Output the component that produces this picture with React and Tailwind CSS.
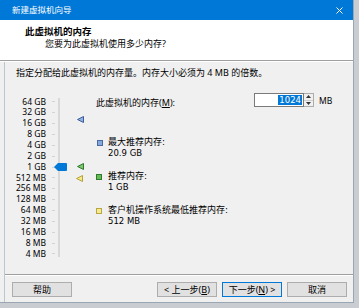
const F = "font-['Noto_Sans','Noto_Sans_CJK_SC',sans-serif]";
const D = "font-['DejaVu_Sans','Noto_Sans_CJK_SC',sans-serif]";

const labels = ["64 GB","32 GB","16 GB","8 GB","4 GB","2 GB","1 GB","512 MB","256 MB","128 MB","64 MB","32 MB","16 MB","8 MB","4 MB"];

function Tri({ fill, stroke, className }) {
  return (
    <svg width="7" height="7" viewBox="0 0 7 7" className={className}>
      <polygon points="0.5,3.5 6.5,0.5 6.5,6.5" fill={fill} stroke={stroke} strokeWidth="1" />
    </svg>
  );
}

function Sq({ fill, stroke }) {
  return <div className="w-[6px] h-[6px] border shrink-0" style={{ background: fill, borderColor: stroke }} />;
}

function Btn({ children, focus }) {
  return (
    <div className={`w-[60px] h-[15px] flex items-center justify-center text-[9px] leading-none text-black bg-[#e1e1e1] border ${focus ? "border-[#0078d7]" : "border-[#adadad]"}`}>
      {children}
    </div>
  );
}

export default function App() {
  return (
    <div className={`w-[359px] h-[308px] bg-[#c9cdd1] overflow-hidden ${F}`}>
      <div className="w-[354px] h-[303px] flex flex-col bg-[#f0f0f0] border-r border-b border-[#9aa6b2]">
        {/* title bar */}
        <div className="h-[20px] shrink-0 bg-[#0078d7] flex items-center pl-[12px] pr-[8px] text-white text-[8.5px]">
          <span className="leading-none">新建虚拟机向导</span>
          <svg width="7" height="7" viewBox="0 0 7 7" className="ml-auto mr-[2px]">
            <path d="M0.5 0.5 L6.5 6.5 M6.5 0.5 L0.5 6.5" stroke="white" strokeWidth="1" />
          </svg>
        </div>
        {/* header */}
        <div className="h-[40px] shrink-0 bg-white pl-[25px] pt-[6px] text-black">
          <div className="text-[9.5px] font-bold leading-[12px]">此虚拟机的内存</div>
          <div className="pl-[20px] text-[9px] leading-[11px]">您要为此虚拟机使用多少内存?</div>
        </div>
        <div className="h-px bg-[#a0a0a0] shrink-0" />
        <div className="h-px bg-white shrink-0" />
        {/* body */}
        <div className="flex-1 flex flex-col ml-[4px] border-l border-[#bcc6d0] text-black">
          <div className="pl-[11px] pt-[5px] text-[9px] leading-[12px]">指定分配给此虚拟机的内存量。内存大小必须为 4 MB 的倍数。</div>
          <div className="flex mt-[13px]">
            {/* slider */}
            <div className="relative w-[91px] h-[170px] flex">
              <div className="w-[41px] pt-[4.5px] flex flex-col text-right text-[8.5px]">
                {labels.map((l) => (
                  <div key={l} className="h-[10.86px] leading-[10.86px] whitespace-nowrap">{l}</div>
                ))}
              </div>
              <div className="ml-[6px] w-[3px] pt-[4.5px] flex flex-col">
                {labels.map((l) => (
                  <div key={l} className="h-[10.86px] flex items-center">
                    <div className="w-[3px] h-px bg-[#d4d4d4]" />
                  </div>
                ))}
              </div>
              <div className="ml-[3px] mt-[6px] w-[2px] h-[159px] bg-[#d8d8d8]" />
              <svg width="13" height="8" viewBox="0 0 13 8" className="absolute left-[49px] top-[71px]">
                <path d="M0 4 L4 0 H12 Q13 0 13 1 V7 Q13 8 12 8 H4 Z" fill="#0078d7" />
              </svg>
              <Tri fill="#8fb0e0" stroke="#3d5f99" className="absolute left-[72px] top-[24px]" />
              <Tri fill="#7cc46f" stroke="#2f7a2f" className="absolute left-[72px] top-[71px]" />
              <Tri fill="#f4e88a" stroke="#b5a23a" className="absolute left-[71px] top-[83px]" />
            </div>
            {/* right panel */}
            <div className="flex flex-col text-[9px]">
              <div className="flex items-start h-[16px]">
                <div className="w-[158px] mt-[5px] leading-[12px]">此虚拟机的内存(<span className="underline">M</span>):</div>
                <div className="mt-[1px] w-[50px] h-[14px] bg-white border border-[#7a7a7a] flex items-center justify-end pr-[1px]">
                  <span className={`bg-[#0078d7] text-white leading-[10px] px-[1px] text-[8.5px] ${D}`}>1024</span>
                </div>
                <div className="mt-[1px] w-[10px] h-[14px] flex flex-col border border-l-0 border-[#adadad] bg-[#f0f0f0]">
                  <div className="flex-1 flex items-center justify-center border-b border-[#d0d0d0]">
                    <svg width="5" height="3" viewBox="0 0 5 3"><polygon points="0,3 2.5,0 5,3" fill="#333" /></svg>
                  </div>
                  <div className="flex-1 flex items-center justify-center">
                    <svg width="5" height="3" viewBox="0 0 5 3"><polygon points="0,0 2.5,3 5,0" fill="#333" /></svg>
                  </div>
                </div>
                <div className="ml-[5px] mt-[3px] leading-[12px] text-[8.5px]">MB</div>
              </div>
              <div className={`flex mt-[28.5px] ${D}`}>
                <div className="ml-[1px] mt-[3px]"><Sq fill="#84a9dc" stroke="#4a6aa0" /></div>
                <div className="ml-[5px] leading-[11px]">
                  <div>最大推荐内存:</div>
                  <div className="text-[8.5px]">20.9 GB</div>
                </div>
              </div>
              <div className={`flex mt-[12px] ${D}`}>
                <div className="mt-[3px]"><Sq fill="#66bb55" stroke="#2f7a2f" /></div>
                <div className="ml-[6px] leading-[11px]">
                  <div>推荐内存:</div>
                  <div className="text-[8.5px]">1 GB</div>
                </div>
              </div>
              <div className={`flex mt-[12px] ${D}`}>
                <div className="mt-[3px]"><Sq fill="#f6eb90" stroke="#b8a640" /></div>
                <div className="ml-[6px] leading-[11px]">
                  <div>客户机操作系统最低推荐内存:</div>
                  <div className="text-[8.5px]">512 MB</div>
                </div>
              </div>
            </div>
          </div>
          {/* bottom */}
          <div className="mt-auto">
            <div className="h-px bg-[#a0a0a0]" />
            <div className="h-px bg-white" />
            <div className="flex pt-[6px] pb-[5px] pl-[7px]">
              <Btn>帮助</Btn>
              <div className="ml-[85px]"><Btn>&lt; 上一步(<span className="underline">B</span>)</Btn></div>
              <div className="ml-[5px]"><Btn focus>下一步(<span className="underline">N</span>) &gt;</Btn></div>
              <div className="ml-[5px]"><Btn>取消</Btn></div>
            </div>
          </div>
        </div>
      </div>
    </div>
  );
}
